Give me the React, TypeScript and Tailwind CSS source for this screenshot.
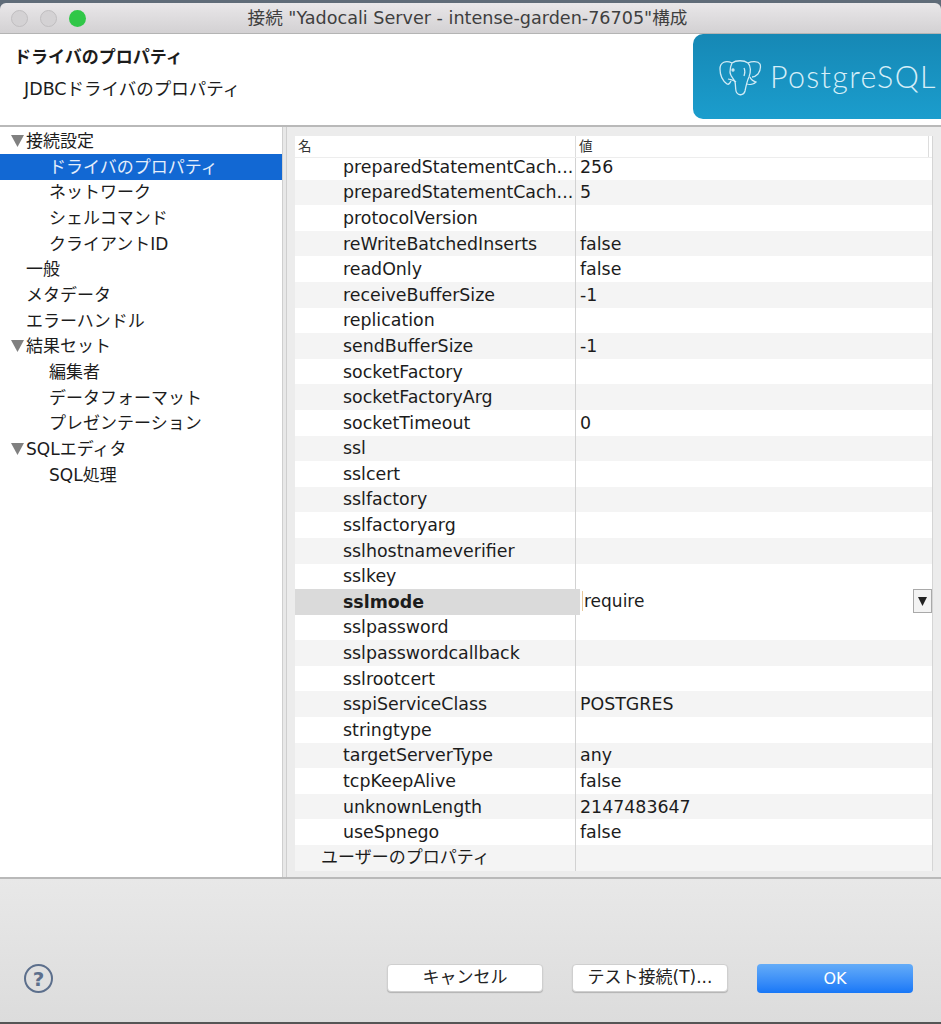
import React from "react";

const F = { fontFamily: '"DejaVu Sans","Noto Sans CJK JP",sans-serif' };

const rows: [string, string][] = [
  ["preparedStatementCach...", "256"],
  ["preparedStatementCach...", "5"],
  ["protocolVersion", ""],
  ["reWriteBatchedInserts", "false"],
  ["readOnly", "false"],
  ["receiveBufferSize", "-1"],
  ["replication", ""],
  ["sendBufferSize", "-1"],
  ["socketFactory", ""],
  ["socketFactoryArg", ""],
  ["socketTimeout", "0"],
  ["ssl", ""],
  ["sslcert", ""],
  ["sslfactory", ""],
  ["sslfactoryarg", ""],
  ["sslhostnameverifier", ""],
  ["sslkey", ""],
  ["sslmode", "require"],
  ["sslpassword", ""],
  ["sslpasswordcallback", ""],
  ["sslrootcert", ""],
  ["sspiServiceClass", "POSTGRES"],
  ["stringtype", ""],
  ["targetServerType", "any"],
  ["tcpKeepAlive", "false"],
  ["unknownLength", "2147483647"],
  ["useSpnego", "false"],
];

const tree: { label: string; level: number; arrow?: boolean; selected?: boolean }[] = [
  { label: "接続設定", level: 0, arrow: true },
  { label: "ドライバのプロパティ", level: 1, selected: true },
  { label: "ネットワーク", level: 1 },
  { label: "シェルコマンド", level: 1 },
  { label: "クライアントID", level: 1 },
  { label: "一般", level: 0 },
  { label: "メタデータ", level: 0 },
  { label: "エラーハンドル", level: 0 },
  { label: "結果セット", level: 0, arrow: true },
  { label: "編集者", level: 1 },
  { label: "データフォーマット", level: 1 },
  { label: "プレゼンテーション", level: 1 },
  { label: "SQLエディタ", level: 0, arrow: true },
  { label: "SQL処理", level: 1 },
];

function Elephant() {
  return (
    <svg width="44" height="44" viewBox="0 0 44 44" fill="none" stroke="#cfeaf5" strokeWidth="1.3" className="shrink-0">
      <path d="M14 8C8 5 2 7 2 14c0 6 3 12 7 15 2 1 3-1 4-3" />
      <path d="M14 8c4-3 12-3 16 0 3 3 3 9 1 14-2 4-3 9-4 14-1 4-6 5-8 2-2-2-1-7-2-11-1-3-5-6-5-10 0-4 1-7 2-9z" />
      <path d="M30 8c4-2 10-2 12 1 1 3 0 7-2 10-2 2-4 3-6 3" />
      <path d="M32 22c1 3 3 4 6 5-2 2-6 3-9 2" />
      <path d="M10 24c3 1 6 1 8 3" />
      <circle cx="15" cy="15" r="1" />
      <path d="M26 13c1 2 1 5 0 8" />
    </svg>
  );
}

function Btn({ children, primary }: { children: React.ReactNode; primary?: boolean }) {
  return primary ? (
    <button className="w-[156px] h-[29px] rounded-[4px] text-white text-[16px] bg-gradient-to-b from-[#64acf8] to-[#1677f7]">{children}</button>
  ) : (
    <button className="w-[156px] h-[28px] rounded-[4px] bg-white text-[#222] text-[17px] border border-[#cfcfcf] shadow-[0_1px_1px_rgba(0,0,0,0.2)]">{children}</button>
  );
}

export default function App() {
  return (
    <div style={F} className="w-[941px] h-[1024px] flex flex-col overflow-hidden bg-white text-[#1c1c1c] text-[17.4px]">
      {/* title bar */}
      <div className="h-[34px] shrink-0 bg-[#5f6b78] pt-[3px]">
        <div className="h-[31px] rounded-t-[6px] bg-gradient-to-b from-[#e9e7e9] to-[#d3d1d3] border-b border-[#b4b4b4] flex items-center pl-[11px]">
          <div className="flex gap-[12px]">
            <span className="w-[17px] h-[17px] rounded-full bg-[#d4d2d4] border border-[#c0bec0]" />
            <span className="w-[17px] h-[17px] rounded-full bg-[#d4d2d4] border border-[#c0bec0]" />
            <span className="w-[17px] h-[17px] rounded-full bg-[#30c748]" />
          </div>
          <div className="flex-1 text-center text-[17.6px] text-[#3f3f3f] pr-[92px]">接続 "Yadocali Server - intense-garden-76705"構成</div>
        </div>
      </div>

      {/* header */}
      <div className="h-[93px] shrink-0 flex border-b-2 border-[#b9b9b9]">
        <div className="flex-1 pl-[14px] pt-[12px]">
          <div className="font-bold text-[17px] leading-[22px]">ドライバのプロパティ</div>
          <div className="pl-[10px] pt-[10px] text-[17.5px] leading-[22px]">JDBCドライバのプロパティ</div>
        </div>
        <div className="w-[248px] h-[85px] shrink-0 rounded-bl-[10px] rounded-tl-[10px] bg-gradient-to-b from-[#1688b5] to-[#1b9dcd] flex items-center pl-[25px] overflow-hidden">
          <Elephant />
          <span style={{ fontFamily: "Lato,sans-serif" }} className="ml-[8px] font-light text-[#d5eef8] text-[30.5px] tracking-[1.3px] whitespace-nowrap">PostgreSQL</span>
        </div>
      </div>

      {/* body */}
      <div className="h-[752px] shrink-0 flex border-b-2 border-[#b9b9b9]">
        <div className="w-[282px] shrink-0 pt-[1.5px] bg-white">
          {tree.map((t) => (
            <div key={t.label} className={`h-[25.7px] flex items-center leading-none text-[17px] ${t.selected ? "bg-[#1268d3] text-[#e4eefb]" : ""} ${t.level === 1 ? "pl-[49px]" : "pl-[26px]"} relative`}>
              {t.arrow && (
                <svg width="13" height="12" viewBox="0 0 13 12" className="absolute left-[11px] top-[6px]">
                  <path d="M0 0h13L6.5 12z" fill="#808080" />
                </svg>
              )}
              {t.label}
            </div>
          ))}
        </div>
        <div className="w-[5px] shrink-0 bg-[#e8e8e8] border-x border-[#cfcfcf]" />
        <div className="flex-1 bg-[#ececec] pl-[8px] pr-[8px] pt-[9px]">
          <div className="bg-white border-r border-[#d5d5d5]">
            <div className="h-[22px] flex items-center text-[13.5px] text-[#333] border-b border-[#ededed] relative z-10 bg-white">
              <div className="w-[280px] pl-[3px]">名</div>
              <div className="flex-1 border-l border-[#dddddd] pl-[3px] mr-[3px] border-r">値</div>
            </div>
            <div className="-mt-[4px]">
              {rows.map(([k, v], i) =>
                k === "sslmode" ? (
                  <div key={k} className="h-[25.6px] flex items-center relative">
                    <div className="w-[285px] h-full flex items-center pl-[48px] bg-[#dadada] font-bold shrink-0">{k}</div>
                    <div className="pl-[2px] text-[17px]"><span className="border-l border-[#e8c89a] pl-[1px]">{v}</span></div>
                    <div className="absolute right-0 top-0 w-[19px] h-[24px] bg-[#f3f3f3] border border-[#a9a9a9] flex items-center justify-center">
                      <svg width="9" height="9" viewBox="0 0 9 9"><path d="M0 0h9L4.5 9z" fill="#222" /></svg>
                    </div>
                  </div>
                ) : (
                  <div key={k + i} className={`h-[25.6px] flex items-center ${i % 2 === 1 ? "bg-[#f4f4f4]" : "bg-white"}`}>
                    <div className="w-[280px] pl-[48px] shrink-0 whitespace-nowrap overflow-hidden">{k}</div>
                    <div className="flex-1 h-full flex items-center border-l border-[#d2d2d2] pl-[4px]">{v}</div>
                  </div>
                )
              )}
              <div className="h-[25.6px] flex items-center bg-[#f4f4f4] text-[17px]">
                <div className="w-[280px] pl-[26px] shrink-0">ユーザーのプロパティ</div>
                <div className="flex-1 h-full border-l border-[#d2d2d2]" />
              </div>
            </div>
          </div>
        </div>
      </div>

      {/* footer */}
      <div className="flex-1 bg-gradient-to-b from-[#e8e8e8] to-[#dcdcdc] flex items-end pb-[29px] pl-[24px] pr-[28px] border-b-2 border-[#555555]">
        <div className="w-[29px] h-[29px] rounded-full border-2 border-[#5c6f8c] flex items-center justify-center text-[#5c6f8c] font-bold text-[20px] mr-[334px]">?</div>
        <div className="flex gap-[29px]">
          <Btn>キャンセル</Btn>
          <Btn>テスト接続(T)...</Btn>
          <Btn primary>OK</Btn>
        </div>
      </div>
    </div>
  );
}
